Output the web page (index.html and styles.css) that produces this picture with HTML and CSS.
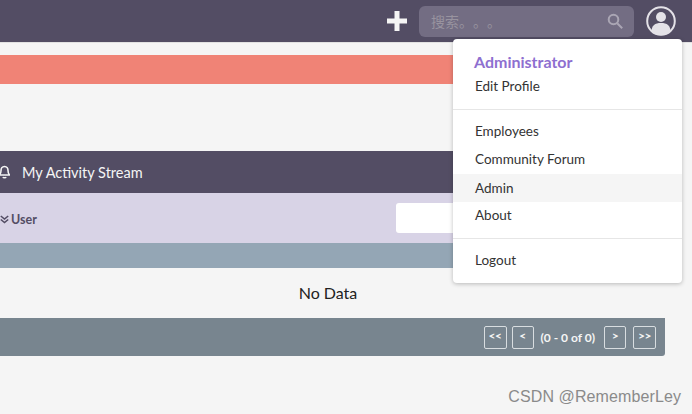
FILE: index.html
```html
<!DOCTYPE html>
<html>
    <head>
        <meta charset="utf-8">
        <title>My Activity Stream</title>
        <link rel="stylesheet" href="styles.css">
    </head>
    <body>
        <header class="topbar">
            <svg class="plus" width="20" height="20" viewBox="0 0 20 20"><path d="M7.500 0h5v7.500H20v5h-7.500V20h-5v-7.500H0v-5h7.500z"/></svg>
            <div class="search">
                <span class="search-text">搜索。。。</span>
                <svg class="search-icon" width="17" height="17" viewBox="0 0 17 17"><circle cx="6.500" cy="6.500" r="4.800"/><path d="M10.200 10.200l5 5"/></svg>
            </div>
            <svg class="avatar" width="30" height="30" viewBox="0 0 30 30"><circle class="avatar-ring" cx="15" cy="15" r="13.800"/><circle cx="15" cy="11" r="5"/><path d="M5.500 25.500c0-6 3.500-8.500 9.500-8.500s9.500 2.500 9.500 8.500a14 14 0 0 1-19 0z"/></svg>
        </header>

        <main class="content">
            <div class="alert"></div>

            <section class="panel">
                <div class="panel-title">
                    <svg class="bell" width="11" height="14" viewBox="0 0 11 14"><path d="M5.500 1.500c-2.500 0-3.500 2-3.500 4 0 2.500-.5 3.500-1.500 4.500h10c-1-1-1.500-2-1.500-4.500 0-2-1-4-3.500-4z"/><path d="M4 12c.3 1 2.700 1 3 0"/></svg>
                    <span>My Activity Stream</span>
                </div>
                <div class="panel-filter">
                    <span class="filter-label">
                        <svg class="chevrons" width="9" height="9" viewBox="0 0 9 9"><path d="M.8 1l3.700 3 3.700-3M.8 4.500l3.700 3 3.700-3"/></svg>User
                    </span>
                    <div class="filter-input"></div>
                </div>
                <div class="panel-head"></div>
                <div class="panel-empty">No Data</div>
                <div class="panel-foot">
                    <button class="page-btn wide">&lt;&lt;</button>
                    <button class="page-btn">&lt;</button>
                    <span class="page-info">(0 - 0 of 0)</span>
                    <button class="page-btn">&gt;</button>
                    <button class="page-btn wide end">&gt;&gt;</button>
                </div>
            </section>
        </main>

        <div class="menu">
            <div class="menu-group first">
                <div class="menu-name">Administrator</div>
                <a class="menu-item">Edit Profile</a>
            </div>
            <div class="menu-group">
                <a class="menu-item">Employees</a>
                <a class="menu-item">Community Forum</a>
                <a class="menu-item active">Admin</a>
                <a class="menu-item">About</a>
            </div>
            <div class="menu-group last">
                <a class="menu-item">Logout</a>
            </div>
        </div>

        <div class="watermark">CSDN @RememberLey</div>
    </body>
</html>
```

FILE: styles.css
```css
html, body
{
    margin: 0;
    height: 100%;
}
body
{
    position: relative;
    overflow: hidden;
    background-color: #f5f5f5;
    color: #333;
    font-family: Lato, "Noto Sans CJK SC", sans-serif;
}

/* top bar */
.topbar
{
    display: flex;
    align-items: center;
    justify-content: flex-end;
    height: 42px;
    padding: 0 16px 0 0;
    background-color: #534d64;
    border-bottom: 1px solid #e2e2e2;
}
.plus
{
    fill: #f5f5f5;
    margin-right: 12px;
}
.search
{
    display: flex;
    align-items: center;
    justify-content: space-between;
    box-sizing: border-box;
    width: 215px;
    height: 31px;
    padding: 0 10px 0 12px;
    border-radius: 6px;
    background-color: #736d83;
}
.search-text
{
    color: #98939f;
    font-size: 14px;
    text-spacing-trim: space-all;
}
.search-icon
{
    fill: none;
    stroke: #aaa6b4;
    stroke-width: 2;
}
.avatar
{
    margin-left: 12px;
    fill: #e4e2e8;
}
.avatar-ring
{
    fill: #534d64;
    stroke: #e4e2e8;
    stroke-width: 2;
}

/* main column */
.content
{
    margin: 12px 27px 0 -9px;
}
.alert
{
    height: 29px;
    background-color: #f08376;
}
.panel
{
    margin-top: 67px;
}
.panel-title
{
    display: flex;
    align-items: center;
    height: 42px;
    padding-left: 8px;
    background-color: #534d64;
    color: #f5f5f5;
    font-size: 14.5px;
}
.bell
{
    fill: none;
    stroke: #f5f5f5;
    stroke-width: 1.6;
    margin-right: 12px;
}
.panel-filter
{
    display: flex;
    align-items: center;
    justify-content: space-between;
    height: 50px;
    padding-left: 9px;
    background-color: #d8d3e6;
}
.filter-label
{
    padding-top: 3px;
    color: #534d64;
    font-size: 12.5px;
    font-weight: 700;
}
.chevrons
{
    fill: none;
    stroke: #534d64;
    stroke-width: 1.6;
    margin-right: 2px;
}
.filter-input
{
    width: 269px;
    height: 30px;
    border-radius: 3px;
    background-color: #fff;
}
.panel-head
{
    height: 25px;
    background-color: #94a6b5;
}
.panel-empty
{
    height: 50px;
    line-height: 50px;
    text-align: center;
    color: #222;
    font-size: 16px;
}
.panel-foot
{
    display: flex;
    align-items: center;
    justify-content: flex-end;
    gap: 5px;
    height: 38px;
    padding-right: 9px;
    border-radius: 0 0 3px 3px;
    background-color: #78858f;
    color: #f5f5f5;
}
.page-btn
{
    width: 22px;
    height: 23px;
    padding: 0 0 3px;
    border: 1px solid #d8dde0;
    border-radius: 2px;
    background: none;
    color: #f5f5f5;
    font-family: Lato, sans-serif;
    font-size: 12px;
    font-weight: 700;
    letter-spacing: -0.5px;
}
.page-btn.wide
{
    width: 23px;
}
.page-btn.end
{
    margin-left: 2px;
}
.page-info
{
    margin: 0 4px 0 2px;
    font-size: 12px;
    font-weight: 700;
}

/* dropdown, lies over the page */
.menu
{
    position: absolute;
    top: 39px;
    left: 453px;
    box-sizing: border-box;
    width: 229px;
    height: 244px;
    border-radius: 4px;
    background-color: #fff;
    box-shadow: 0 1px 4px rgba(0,0,0,0.25);
    font-size: 13.5px;
}
.menu-group
{
    padding: 8px 0;
    border-top: 1px solid #e6e6e6;
}
.menu-group.first
{
    padding: 13px 0 9px;
    border-top: 0;
}
.menu-group.last
{
    padding-top: 7px;
}
.menu-name
{
    padding-left: 21px;
    color: #8e6fd0;
    font-size: 16px;
    font-weight: 700;
    line-height: 20px;
}
.menu-item
{
    display: block;
    height: 28px;
    padding-left: 22px;
    line-height: 27px;
    color: #333;
}
.first .menu-item, .last .menu-item, .menu-item.active
{
    line-height: 28px;
}
.menu-item.active
{
    background-color: #f5f5f5;
}
.watermark
{
    position: absolute;
    right: 11px;
    bottom: 8px;
    color: #8a8a8a;
    font-family: "Liberation Sans", sans-serif;
    font-size: 16px;
    letter-spacing: 0.1px;
}
```
